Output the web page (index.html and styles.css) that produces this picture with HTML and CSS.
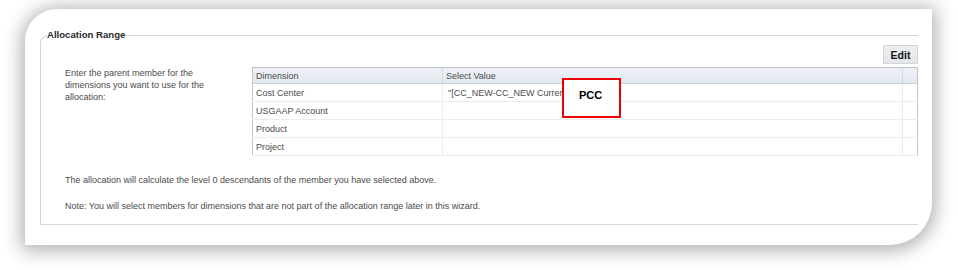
FILE: index.html
```html
<!DOCTYPE html>
<html>
<head>
<meta charset="utf-8">
<link rel="stylesheet" href="styles.css">
</head>
<body>
<div class="card">
  <fieldset class="group">
    <legend class="group-title">Allocation Range</legend>
    <div class="toolbar"><button class="btn">Edit</button></div>
    <div class="main">
      <div class="desc">Enter the parent member for the dimensions you want to use for the allocation:</div>
      <div class="grid-wrap">
        <table class="grid">
          <colgroup><col class="c1"><col class="c2"><col class="c3"></colgroup>
          <thead>
            <tr><th>Dimension</th><th>Select Value</th><th></th></tr>
          </thead>
          <tbody>
            <tr><td>Cost Center</td><td class="val">"[CC_NEW-CC_NEW Current]"</td><td></td></tr>
            <tr><td>USGAAP Account</td><td></td><td></td></tr>
            <tr><td>Product</td><td></td><td></td></tr>
            <tr><td>Project</td><td></td><td></td></tr>
          </tbody>
        </table>
        <div class="callout">PCC</div>
      </div>
    </div>
    <p class="note first">The allocation will calculate the level 0 descendants of the member you have selected above.</p>
    <p class="note">Note: You will select members for dimensions that are not part of the allocation range later in this wizard.</p>
  </fieldset>
</div>
</body>
</html>
```
FILE: styles.css
```css
html, body {
  margin: 0;
  padding: 0;
  background: #ffffff;
}
body {
  width: 958px;
  height: 270px;
  overflow: hidden;
  font-family: "Liberation Sans", Arial, sans-serif;
  color: #4b4b4b;
}
.card {
  box-sizing: border-box;
  margin: 9px 0 0 25px;
  width: 907px;
  height: 236px;
  background: #fff;
  border-radius: 32px 0 42px 0;
  box-shadow: 0 2px 18px 4px rgba(0, 0, 0, 0.3);
  padding: 20px 14px 20px 15px;
  display: flex;
  flex-direction: column;
}
.group {
  flex: 1;
  margin: 0;
  padding: 0;
  min-width: 0;
  border: 1px solid #d5d5d5;
  border-right: none;
  border-top-left-radius: 8px;
}
.group-title {
  margin-left: 6px;
  padding: 0 1px 0 0;
  font-weight: bold;
  font-size: 9.6px;
  line-height: 12px;
  color: #2a2a2a;
}
.toolbar {
  display: flex;
  justify-content: flex-end;
  margin-top: 4px;
}
.btn {
  box-sizing: border-box;
  height: 19px;
  width: 35px;
  padding: 0;
  border: 1px solid #d2d5da;
  background: linear-gradient(#eceef1, #e2e5e9);
  font-family: "Liberation Sans", Arial, sans-serif;
  font-weight: bold;
  font-size: 10.5px;
  color: #111;
  border-radius: 0;
}
.main {
  display: flex;
  margin-top: 3px;
}
.desc {
  box-sizing: border-box;
  width: 211px;
  padding: 0 40px 0 24px;
  font-size: 9px;
  line-height: 12px;
}
.grid-wrap {
  position: relative;
  width: 666px;
}
.grid {
  width: 666px;
  border-collapse: collapse;
  table-layout: fixed;
  font-size: 9px;
  border: 1px solid #c4c4c4;
}
.c1 { width: 190px; }
.c3 { width: 15px; }
.grid th {
  height: 15px;
  padding: 0 0 0 3px;
  text-align: left;
  font-weight: normal;
  color: #4b4b4b;
  background: linear-gradient(#eef2f7, #e2e8f0);
  border-bottom: 1px solid #c6ced9;
  border-right: 1px solid #d3d9e1;
}
.grid td {
  height: 17px;
  padding: 0 0 0 3px;
  border-bottom: 1px solid #ececec;
  border-right: 1px solid #ececec;
  white-space: nowrap;
  overflow: hidden;
}
.grid td.val {
  padding-left: 5px;
}
.grid th:last-child, .grid td:last-child {
  border-right: none;
}
.callout {
  position: absolute;
  left: 310px;
  top: 11px;
  box-sizing: border-box;
  width: 59px;
  height: 40px;
  border: 2px solid #ee0000;
  background: #fff;
  padding: 9px 0 0 15px;
  font-weight: bold;
  font-size: 11px;
  line-height: 13px;
  color: #000;
}
.note {
  margin: 14px 0 0 24px;
  font-size: 9px;
  line-height: 12px;
}
.note.first {
  margin-top: 18px;
}
```
